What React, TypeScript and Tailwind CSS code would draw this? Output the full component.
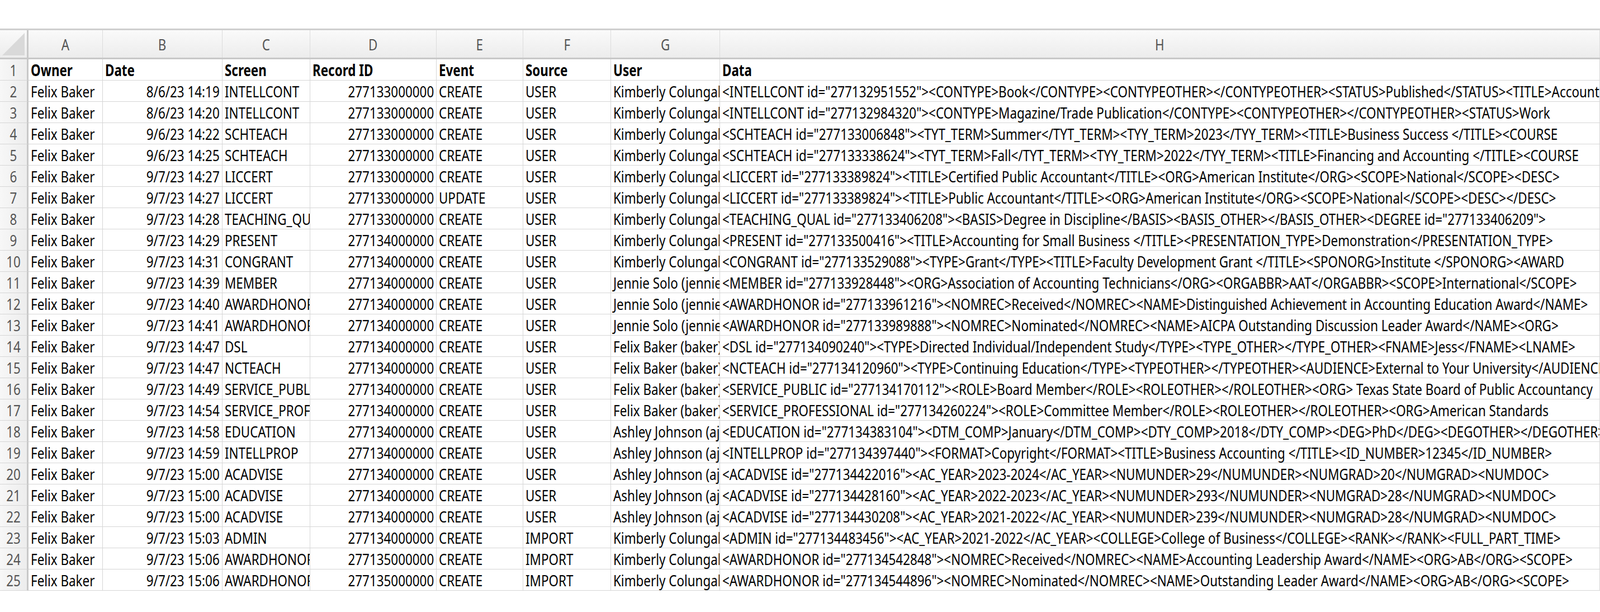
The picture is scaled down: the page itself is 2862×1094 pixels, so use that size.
import React from "react"

const cols = [
    { k: "A", w: "w-[133px]" },
    { k: "B", w: "w-[214px]" },
    { k: "C", w: "w-[157px]" },
    { k: "D", w: "w-[226px]" },
    { k: "E", w: "w-[155px]" },
    { k: "F", w: "w-[157px]" },
    { k: "G", w: "w-[195px]" },
    { k: "H", w: "flex-1" },
]

type Row = [string, string, string, string, string, string, string, string]

const rows: Row[] = [
    ["Felix Baker", "8/6/23 14:19", "INTELLCONT", "277133000000", "CREATE", "USER", "Kimberly  Colungal", '<INTELLCONT id="277132951552"><CONTYPE>Book</CONTYPE><CONTYPEOTHER></CONTYPEOTHER><STATUS>Published</STATUS><TITLE>Accounting'],
    ["Felix Baker", "8/6/23 14:20", "INTELLCONT", "277133000000", "CREATE", "USER", "Kimberly  Colungal", '<INTELLCONT id="277132984320"><CONTYPE>Magazine/Trade Publication</CONTYPE><CONTYPEOTHER></CONTYPEOTHER><STATUS>Work'],
    ["Felix Baker", "9/6/23 14:22", "SCHTEACH", "277133000000", "CREATE", "USER", "Kimberly  Colungal", '<SCHTEACH id="277133006848"><TYT_TERM>Summer</TYT_TERM><TYY_TERM>2023</TYY_TERM><TITLE>Business Success </TITLE><COURSE'],
    ["Felix Baker", "9/6/23 14:25", "SCHTEACH", "277133000000", "CREATE", "USER", "Kimberly  Colungal", '<SCHTEACH id="277133338624"><TYT_TERM>Fall</TYT_TERM><TYY_TERM>2022</TYY_TERM><TITLE>Financing and Accounting </TITLE><COURSE'],
    ["Felix Baker", "9/7/23 14:27", "LICCERT", "277133000000", "CREATE", "USER", "Kimberly  Colungal", '<LICCERT id="277133389824"><TITLE>Certified Public Accountant</TITLE><ORG>American Institute</ORG><SCOPE>National</SCOPE><DESC>'],
    ["Felix Baker", "9/7/23 14:27", "LICCERT", "277133000000", "UPDATE", "USER", "Kimberly  Colungal", '<LICCERT id="277133389824"><TITLE>Public Accountant</TITLE><ORG>American Institute</ORG><SCOPE>National</SCOPE><DESC></DESC>'],
    ["Felix Baker", "9/7/23 14:28", "TEACHING_QUAL", "277133000000", "CREATE", "USER", "Kimberly  Colungal", '<TEACHING_QUAL id="277133406208"><BASIS>Degree in Discipline</BASIS><BASIS_OTHER></BASIS_OTHER><DEGREE id="277133406209">'],
    ["Felix Baker", "9/7/23 14:29", "PRESENT", "277134000000", "CREATE", "USER", "Kimberly  Colungal", '<PRESENT id="277133500416"><TITLE>Accounting for Small Business </TITLE><PRESENTATION_TYPE>Demonstration</PRESENTATION_TYPE>'],
    ["Felix Baker", "9/7/23 14:31", "CONGRANT", "277134000000", "CREATE", "USER", "Kimberly  Colungal", '<CONGRANT id="277133529088"><TYPE>Grant</TYPE><TITLE>Faculty Development Grant </TITLE><SPONORG>Institute </SPONORG><AWARD'],
    ["Felix Baker", "9/7/23 14:39", "MEMBER", "277134000000", "CREATE", "USER", "Jennie Solo  (jennie)", '<MEMBER id="277133928448"><ORG>Association of Accounting Technicians</ORG><ORGABBR>AAT</ORGABBR><SCOPE>International</SCOPE>'],
    ["Felix Baker", "9/7/23 14:40", "AWARDHONOR", "277134000000", "CREATE", "USER", "Jennie Solo  (jennie)", '<AWARDHONOR id="277133961216"><NOMREC>Received</NOMREC><NAME>Distinguished Achievement in Accounting Education Award</NAME>'],
    ["Felix Baker", "9/7/23 14:41", "AWARDHONOR", "277134000000", "CREATE", "USER", "Jennie Solo  (jennie)", '<AWARDHONOR id="277133989888"><NOMREC>Nominated</NOMREC><NAME>AICPA Outstanding Discussion Leader Award</NAME><ORG>'],
    ["Felix Baker", "9/7/23 14:47", "DSL", "277134000000", "CREATE", "USER", "Felix Baker (baker)", '<DSL id="277134090240"><TYPE>Directed Individual/Independent Study</TYPE><TYPE_OTHER></TYPE_OTHER><FNAME>Jess</FNAME><LNAME>'],
    ["Felix Baker", "9/7/23 14:47", "NCTEACH", "277134000000", "CREATE", "USER", "Felix Baker (baker)", '<NCTEACH id="277134120960"><TYPE>Continuing Education</TYPE><TYPEOTHER></TYPEOTHER><AUDIENCE>External to Your University</AUDIENCE>'],
    ["Felix Baker", "9/7/23 14:49", "SERVICE_PUBLIC", "277134000000", "CREATE", "USER", "Felix Baker (baker)", '<SERVICE_PUBLIC id="277134170112"><ROLE>Board Member</ROLE><ROLEOTHER></ROLEOTHER><ORG> Texas State Board of Public Accountancy'],
    ["Felix Baker", "9/7/23 14:54", "SERVICE_PROFESSIONAL", "277134000000", "CREATE", "USER", "Felix Baker (baker)", '<SERVICE_PROFESSIONAL id="277134260224"><ROLE>Committee Member</ROLE><ROLEOTHER></ROLEOTHER><ORG>American Standards'],
    ["Felix Baker", "9/7/23 14:58", "EDUCATION", "277134000000", "CREATE", "USER", "Ashley Johnson  (ajohnson)", '<EDUCATION id="277134383104"><DTM_COMP>January</DTM_COMP><DTY_COMP>2018</DTY_COMP><DEG>PhD</DEG><DEGOTHER></DEGOTHER>'],
    ["Felix Baker", "9/7/23 14:59", "INTELLPROP", "277134000000", "CREATE", "USER", "Ashley Johnson  (ajohnson)", '<INTELLPROP id="277134397440"><FORMAT>Copyright</FORMAT><TITLE>Business Accounting </TITLE><ID_NUMBER>12345</ID_NUMBER>'],
    ["Felix Baker", "9/7/23 15:00", "ACADVISE", "277134000000", "CREATE", "USER", "Ashley Johnson  (ajohnson)", '<ACADVISE id="277134422016"><AC_YEAR>2023-2024</AC_YEAR><NUMUNDER>29</NUMUNDER><NUMGRAD>20</NUMGRAD><NUMDOC>'],
    ["Felix Baker", "9/7/23 15:00", "ACADVISE", "277134000000", "CREATE", "USER", "Ashley Johnson  (ajohnson)", '<ACADVISE id="277134428160"><AC_YEAR>2022-2023</AC_YEAR><NUMUNDER>293</NUMUNDER><NUMGRAD>28</NUMGRAD><NUMDOC>'],
    ["Felix Baker", "9/7/23 15:00", "ACADVISE", "277134000000", "CREATE", "USER", "Ashley Johnson  (ajohnson)", '<ACADVISE id="277134430208"><AC_YEAR>2021-2022</AC_YEAR><NUMUNDER>239</NUMUNDER><NUMGRAD>28</NUMGRAD><NUMDOC>'],
    ["Felix Baker", "9/7/23 15:03", "ADMIN", "277134000000", "CREATE", "IMPORT", "Kimberly  Colungal", '<ADMIN id="277134483456"><AC_YEAR>2021-2022</AC_YEAR><COLLEGE>College of Business</COLLEGE><RANK></RANK><FULL_PART_TIME>'],
    ["Felix Baker", "9/7/23 15:06", "AWARDHONOR", "277135000000", "CREATE", "IMPORT", "Kimberly  Colungal", '<AWARDHONOR id="277134542848"><NOMREC>Received</NOMREC><NAME>Accounting Leadership Award</NAME><ORG>AB</ORG><SCOPE>'],
    ["Felix Baker", "9/7/23 15:06", "AWARDHONOR", "277135000000", "CREATE", "IMPORT", "Kimberly  Colungal", '<AWARDHONOR id="277134544896"><NOMREC>Nominated</NOMREC><NAME>Outstanding Leader Award</NAME><ORG>AB</ORG><SCOPE>'],
]

const header: Row = ["Owner", "Date", "Screen", "Record ID", "Event", "Source", "User", "Data"]

function Cell({ w, text, right, bold }: { w: string; text: string; right?: boolean; bold?: boolean }) {
    return (
        <div
            className={`${w} shrink-0 h-full border-r border-b border-[#d6d6d6] overflow-hidden whitespace-nowrap px-[4px] flex items-center ${right ? "justify-end" : ""} ${bold ? "font-bold" : ""}`}
        >
            <span className={`inline-block scale-x-[0.8] ${right ? "origin-right" : "origin-left"}`}>{text}</span>
        </div>
    )
}

export default function App() {
    return (
        <div className="w-[2862px] h-[1094px] bg-white overflow-hidden text-[28px] text-black font-['Liberation_Sans_Narrow','Roboto',sans-serif] leading-none">
            <div className="h-[51px]" />
            <div className="border-t-[3px] border-[#cfcfcf]">
                <div className="flex h-[52px] bg-gradient-to-b from-[#fafafa] to-[#ececec] border-b-[3px] border-[#c8c8c8] text-[#555]">
                    <div className="w-[51px] shrink-0 h-full border-r-[3px] border-[#c8c8c8] relative">
                        <div className="absolute right-[4px] bottom-[4px] w-0 h-0 border-l-[40px] border-l-transparent border-b-[40px] border-b-[#d9d9d9]" />
                    </div>
                    {cols.map((c) => (
                        <div key={c.k} className={`${c.w} shrink-0 h-full border-r border-[#dcdcdc] flex items-center justify-center`}>
                            <span className="inline-block scale-x-[0.8]">{c.k}</span>
                        </div>
                    ))}
                </div>
                {[header, ...rows].map((r, i) => (
                    <div key={i} className="flex h-[38px]">
                        <div className="w-[51px] shrink-0 h-full bg-gradient-to-r from-[#f7f7f7] to-[#ededed] border-r-[3px] border-b border-r-[#c8c8c8] border-b-[#d6d6d6] flex items-center justify-center text-[#555]">
                            <span className="inline-block scale-x-[0.8]">{i + 1}</span>
                        </div>
                        {r.map((t, j) => (
                            <Cell
                                key={j}
                                w={cols[j].w}
                                text={t}
                                bold={i === 0}
                                right={i > 0 && (j === 1 || j === 3)}
                            />
                        ))}
                    </div>
                ))}
            </div>
        </div>
    )
}
